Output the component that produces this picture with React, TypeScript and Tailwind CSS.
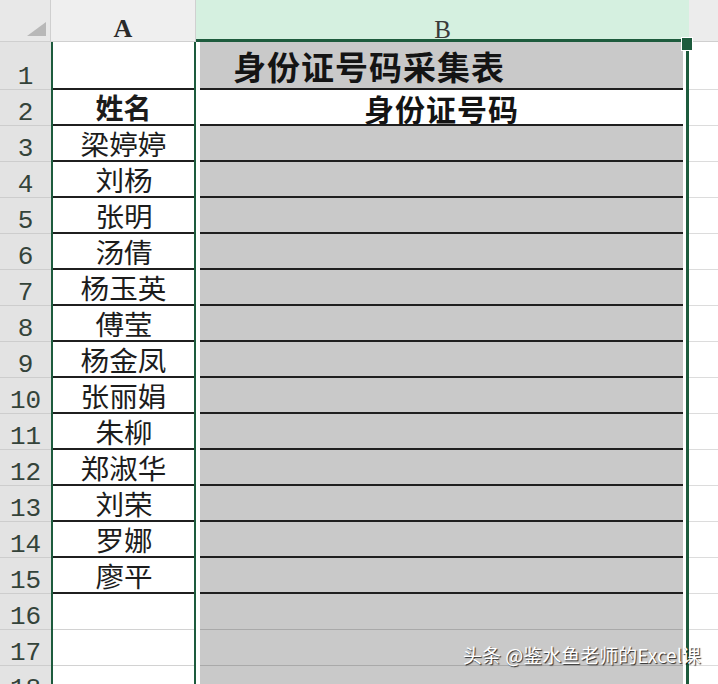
import React from "react";

const names = [
  "梁婷婷",
  "刘杨",
  "张明",
  "汤倩",
  "杨玉英",
  "傅莹",
  "杨金凤",
  "张丽娟",
  "朱柳",
  "郑淑华",
  "刘荣",
  "罗娜",
  "廖平",
];

const rowNums = Array.from({ length: 18 }, (_, i) => i + 1);
const heightOf = (n: number) => (n === 1 ? "h-[48px]" : "h-[36px]");

const cjk = "font-['Noto_Sans_CJK_SC','Noto_Sans',sans-serif]";
const green = "border-[#1d5b3d]";

export default function App() {
  return (
    <div className="relative w-[718px] h-[684px] overflow-hidden bg-white flex">
      {/* Row header column */}
      <div className="w-[51px] shrink-0 flex flex-col">
        <div className="h-[42px] shrink-0 bg-[#e8e8e8] border-b border-r border-[#cfcfcf] relative">
          <svg className="absolute left-[27px] top-[22px]" width="19" height="14" viewBox="0 0 19 14">
            <polygon points="19,0 19,14 0,14" fill="#b8b8b8" />
          </svg>
        </div>
        {rowNums.map((n) => (
          <div
            key={n}
            className={`${heightOf(n)} shrink-0 bg-[#e3e3e3] border-b border-[#cdcdcd] flex items-end justify-center font-['Liberation_Mono',monospace] text-[26px] leading-none text-[#34433a]`}
          >
            <span className="translate-y-[1px]">{n}</span>
          </div>
        ))}
      </div>

      {/* Column A */}
      <div className="w-[145px] shrink-0 flex flex-col">
        <div className="h-[42px] shrink-0 bg-[#efefef] border-b border-r border-[#d0d0d0] flex items-end justify-center font-['Liberation_Serif',serif] font-bold text-[26px] leading-none text-[#2a2a2a]">
          <span className="translate-y-[1px]">A</span>
        </div>
        <div className={`flex flex-col border-x-2 ${green}`}>
          {rowNums.map((n) => {
            let text = "";
            let bold = false;
            if (n === 2) {
              text = "姓名";
              bold = true;
            } else if (n >= 3 && n <= 15) text = names[n - 3];
            const dark = n <= 15;
            return (
              <div
                key={n}
                className={`${heightOf(n)} shrink-0 bg-white flex items-center justify-center ${
                  dark ? "border-b-2 border-[#1f1f1f]" : "border-b border-[#d2d2d2]"
                } ${cjk} leading-none text-[#1c1c1c]`}
              >
                {text && (
                  <span
                    className={`inline-block ${
                      bold ? "font-bold text-[28px]" : "font-normal text-[27px] scale-x-[1.06]"
                    }`}
                  >
                    {text}
                  </span>
                )}
              </div>
            );
          })}
        </div>
      </div>

      {/* Column B (selected) */}
      <div className="w-[493px] shrink-0 flex flex-col">
        <div className={`h-[42px] shrink-0 bg-[#d5f0e0] border-b-[3px] ${green} flex items-end justify-center font-['Liberation_Serif',serif] text-[25px] leading-none text-[#3a3a3a]`}>
          <span className="translate-y-[3px]">B</span>
        </div>
        <div className={`flex flex-col bg-white pl-[4px] pr-[3px] border-r-[3px] ${green}`}>
          {rowNums.map((n) => {
            const dark = n <= 15;
            const bg = n === 2 ? "bg-white" : "bg-[#c9c9c9]";
            return (
              <div
                key={n}
                className={`${heightOf(n)} shrink-0 ${bg} flex items-center ${
                  dark ? "border-b-2 border-[#1f1f1f]" : "border-b border-[#a9a9a9]"
                } ${n === 2 ? "justify-center" : "justify-start pl-[33px]"} ${cjk} font-bold leading-none text-[#141414]`}
              >
                {n === 1 && <span className="text-[33px] tracking-[1px] pt-[2px]">身份证号码采集表</span>}
                {n === 2 && <span className="text-[30px] tracking-[1px] pt-[2px]">身份证号码</span>}
              </div>
            );
          })}
        </div>
      </div>

      {/* Column C */}
      <div className="flex-1 flex flex-col">
        <div className="h-[42px] shrink-0 bg-[#ececec] border-b border-[#cfcfcf]" />
        {rowNums.map((n) => (
          <div key={n} className={`${heightOf(n)} shrink-0 bg-white border-b border-[#dcdcdc]`} />
        ))}
      </div>

      {/* Fill handle */}
      <div className="absolute left-[681px] top-[37px] w-[12px] h-[14px] bg-[#1d5b3d] border border-white" />

      {/* Watermark */}
      <div
        className={`absolute left-[463px] top-[645px] text-[19px] leading-none text-white ${cjk} [text-shadow:1px_1px_1px_rgba(0,0,0,0.8)]`}
      >
        头条 @鉴水鱼老师的Excel课
      </div>
    </div>
  );
}
